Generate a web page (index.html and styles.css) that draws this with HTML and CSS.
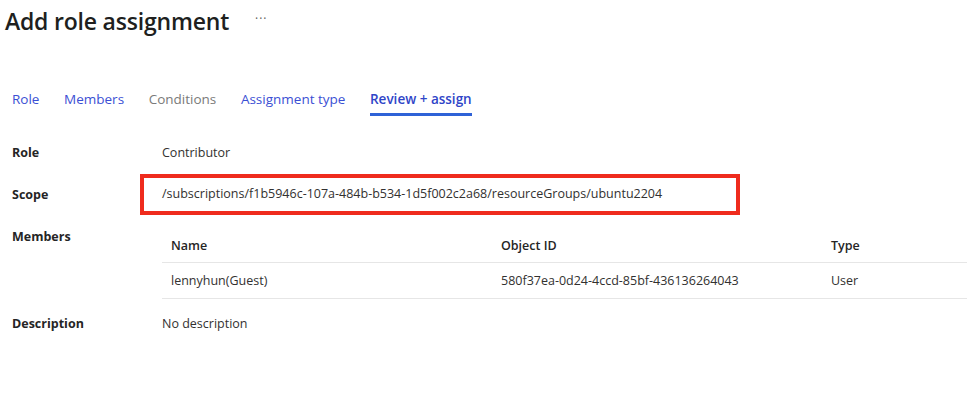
FILE: index.html
```html
<!DOCTYPE html>
<html>
<head>
<meta charset="utf-8">
<link rel="stylesheet" href="styles.css">
</head>
<body>
<div class="page">
  <header class="head">
    <h1 class="title">Add role assignment</h1>
    <span class="more">···</span>
  </header>
  <nav class="tabs">
    <span class="tab">Role</span>
    <span class="tab">Members</span>
    <span class="tab disabled">Conditions</span>
    <span class="tab">Assignment type</span>
    <span class="tab active">Review + assign</span>
  </nav>
  <div class="details">
    <div class="row role-row">
      <div class="label">Role</div>
      <div class="value">Contributor</div>
    </div>
    <div class="row scope-row">
      <div class="label">Scope</div>
      <div class="value scope">/subscriptions/f1b5946c-107a-484b-b534-1d5f002c2a68/resourceGroups/ubuntu2204</div>
    </div>
    <div class="row members-row">
      <div class="label">Members</div>
      <div class="table">
        <div class="trow thead">
          <div class="c1">Name</div>
          <div class="c2">Object ID</div>
          <div class="c3">Type</div>
        </div>
        <div class="trow tbody">
          <div class="c1">lennyhun(Guest)</div>
          <div class="c2">580f37ea-0d24-4ccd-85bf-436136264043</div>
          <div class="c3">User</div>
        </div>
      </div>
    </div>
    <div class="row desc-row">
      <div class="label">Description</div>
      <div class="value">No description</div>
    </div>
  </div>
</div>
</body>
</html>
```

FILE: styles.css
```css
* { box-sizing: border-box; }
html, body { margin: 0; padding: 0; background: #fff; }
body {
  font-family: "Open Sans", "Noto Sans", sans-serif;
  color: #323130;
  font-size: 13px;
}
.page { width: 967px; height: 411px; overflow: hidden; }
.head {
  display: flex;
  align-items: center;
  padding: 3px 0 0 5px;
  height: 38px;
}
.title {
  margin: 0;
  font-size: 23px;
  font-weight: 600;
  color: #201f1e;
  letter-spacing: -0.2px;
}
.more {
  margin-left: 26px;
  font-size: 12px;
  letter-spacing: 1px;
  color: #605e5c;
  position: relative;
  top: -2px;
}
.tabs {
  display: flex;
  gap: 24.6px;
  margin-top: 46px;
  padding-left: 12px;
  height: 34px;
}
.tab {
  color: #3b4fd4;
  font-size: 13.5px;
  line-height: 31px;
  height: 32px;
  border-bottom: 3px solid transparent;
}
.tab.disabled { color: #7a7a7a; }
.tab.active { border-bottom-color: #2f62d7; color: #2f45c8; font-weight: 600; }
.details { padding-left: 12px; margin-top: 21px; }
.row { display: flex; }
.label {
  width: 150px;
  font-weight: 700;
  color: #252525;
  font-size: 12.5px;
}
.value { font-size: 12.5px; }
.role-row { height: 24px; padding-top: 5px; }
.scope-row {
  margin-top: 11px;
  align-items: center;
  height: 40px;
}
.scope {
  margin-left: -22px;
  width: 600px;
  height: 41px;
  border: 4px solid #ef2b1d;
  padding-left: 18px;
  display: flex;
  align-items: center;
  padding-bottom: 2px;
}
.members-row { margin-top: 14px; }
.table {
  flex: 1;
  margin-top: 6px;
  font-size: 12.5px;
}
.trow { display: flex; align-items: center; padding-left: 9px; }
.thead { height: 29px; border-bottom: 1px solid #e6e6e6; font-weight: 600; color: #252525; padding-bottom: 5px; }
.tbody { height: 36px; border-bottom: 1px solid #e6e6e6; }
.c1 { width: 330px; }
.c2 { width: 330px; }
.c3 { flex: 1; }
.desc-row { margin-top: 16px; }
```
